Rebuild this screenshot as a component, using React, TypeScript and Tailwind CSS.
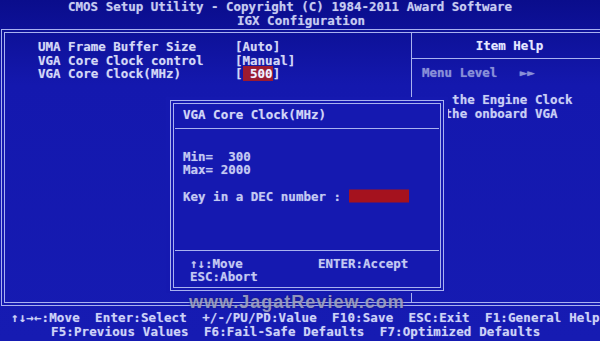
const line = "border-[#a9b2f0]";

const settings = [
  { label: "UMA Frame Buffer Size", value: "[Auto]" },
  { label: "VGA Core Clock control", value: "[Manual]" },
  { label: "VGA Core Clock(MHz)", value: "500", selected: true },
];

function Setting({ label, value, selected }: { label: string; value: string; selected?: boolean }) {
  return (
    <div className="grid grid-cols-[197px_auto] whitespace-pre">
      <span>{label}</span>
      {selected ? (
        <span>
          [<span className="bg-[#9c1a30] text-[#f2f2ff]"> {value}</span>]
        </span>
      ) : (
        <span>{value}</span>
      )}
    </div>
  );
}

function Popup() {
  return (
    <div className="absolute left-[166px] top-[97px] h-[196px] w-[282px] bg-[#1519b0] px-[4px] pb-[2px] pt-[3px] text-[#c3c9f1]">
      <div className={`h-full border ${line} p-[2px]`}>
        <div className={`flex h-full flex-col border ${line}`}>
          <div className="pl-[9px] pt-[4px] text-[#d2d6f6]">VGA Core Clock(MHz)</div>
          <div className={`mx-[1px] mt-[6px] border-t ${line}`} />
          <div className="mt-[21px] whitespace-pre pl-[9px]">
            <div>Min=  300</div>
            <div>Max= 2000</div>
            <div className="mt-[13.6px] flex items-center">
              <span>Key in a DEC number : </span>
              <span className="h-[13px] w-[60px] -translate-y-[1.5px] bg-[#a5121e]" />
            </div>
          </div>
          <div className="flex-1" />
          <div className={`mx-[1px] border-t ${line}`} />
          <div className="whitespace-pre pb-[3px] pl-[16px] pt-[6px]">
            <div>↑↓:Move          ENTER:Accept</div>
            <div>ESC:Abort</div>
          </div>
        </div>
      </div>
    </div>
  );
}

export default function App() {
  return (
    <div className="relative h-[341px] w-[600px] overflow-hidden bg-linear-to-b from-[#0a0d8c] via-[#1418ae] via-25% to-[#161bb2] font-['DejaVu_Sans_Mono','Liberation_Mono',monospace] text-[12.5px] leading-[13.6px] font-bold text-[#d4d8f5] [text-shadow:0_0_1px_rgba(190,200,255,0.5)]">
      <header className="whitespace-pre text-[#c6cbef]">
        <div className="pl-[68px]">CMOS Setup Utility - Copyright (C) 1984-2011 Award Software</div>
        <div className="pl-[237px]">IGX Configuration</div>
      </header>

      <div className={`ml-[1px] mt-[2px] h-[277px] w-[610px] border ${line} p-[2px]`}>
        <div className={`flex h-full border ${line}`}>
          <section className={`w-[407px] border-r ${line} pl-[33px] pt-[7px]`}>
            {settings.map((s) => (
              <Setting key={s.label} {...s} />
            ))}
          </section>
          <aside className="flex-1 whitespace-pre">
            <div className={`flex h-[26px] items-center justify-center border-b ${line} text-[#e6e9ff]`}>
              Item Help
            </div>
            <div className="pl-[10px] pt-[7px]">
              <div className="text-[#8990d6]">Menu Level   ►►</div>
              <div className="h-[13.6px]" />
              <div className="text-[#c9cff4]">    the Engine Clock</div>
              <div className="text-[#c9cff4]">   the onboard VGA</div>
            </div>
          </aside>
        </div>
      </div>

      <footer className="mt-[5px] whitespace-pre tracking-[0.12px] text-[#cdd2f6]">
        <div className="pl-[11px]">↑↓→←:Move  Enter:Select  +/-/PU/PD:Value  F10:Save  ESC:Exit  F1:General Help</div>
        <div className="pl-[51px]">F5:Previous Values  F6:Fail-Safe Defaults  F7:Optimized Defaults</div>
      </footer>

      <Popup />

      <div className="pointer-events-none absolute left-[189px] top-[294px] font-['Liberation_Sans',Arial,sans-serif] text-[18px] leading-[16px] font-bold tracking-[1px] text-[#b9bdd6]/75 [text-shadow:0_0_2px_rgba(30,30,90,0.8)]">
        www.JagatReview.com
      </div>
    </div>
  );
}
